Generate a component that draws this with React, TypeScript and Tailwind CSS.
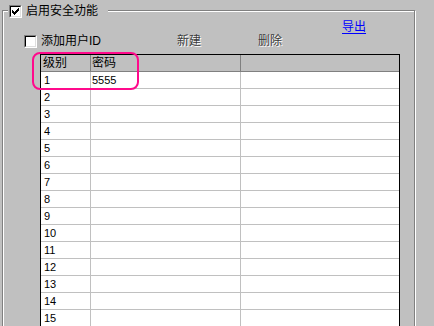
import React from "react";

const font = "font-['Liberation_Sans','Noto_Sans_CJK_SC',sans-serif]";

function Check({ checked }: { checked?: boolean }) {
  return (
    <div className="w-[13px] h-[13px] shrink-0 border border-t-[#808080] border-l-[#808080] border-b-white border-r-white">
      <div className="w-[11px] h-[11px] border border-t-black border-l-black border-b-[#dfdfdf] border-r-[#dfdfdf] bg-white flex items-center justify-center">
        {checked && (
          <svg width="7" height="7" viewBox="0 0 7 7" shapeRendering="crispEdges">
            <path
              fill="#000"
              d="M6 0h1v1h-1z M5 1h2v1h-2z M0 2h1v1h-1z M4 2h3v1h-3z M0 3h2v1h-2z M3 3h3v1h-3z M0 4h5v1h-5z M1 5h3v1h-3z M2 6h1v1h-1z"
            />
          </svg>
        )}
      </div>
    </div>
  );
}

const rows = Array.from({ length: 15 }, (_, i) => ({
  level: String(i + 1),
  pwd: i === 0 ? "5555" : "",
}));

export default function App() {
  return (
    <div className={`relative w-[434px] h-[326px] overflow-hidden bg-[#c0c0c0] text-black ${font}`}>
      {/* group box */}
      <div className="relative mt-[10px] ml-[2px] w-[413px] h-[420px] border border-[#808080] shadow-[1px_1px_0_#fff,inset_1px_1px_0_#fff]">
        <div className="absolute top-[-7px] left-[5px] w-[100px] h-[14px] bg-[#c0c0c0] flex items-center pl-[1px]">
          <Check checked />
          <span className="ml-[4px] text-[12px] leading-[14px]">启用安全功能</span>
        </div>

        <div className="mt-[9px] h-[14px] pl-[339px] flex items-center">
          <span className="text-[12px] leading-[14px] text-[#0000ff] underline underline-offset-2">导出</span>
        </div>

        <div className="h-[14px] pl-[21px] flex items-center">
          <Check />
          <span className="ml-[4px] w-[136px] text-[12px] leading-[14px]">添加用户ID</span>
          <span className="w-[81px] text-[12px] leading-[14px] text-[#3c3c3c] [text-shadow:1px_1px_0_#fff]">新建</span>
          <span className="text-[12px] leading-[14px] text-[#3c3c3c] [text-shadow:1px_1px_0_#fff]">删除</span>
        </div>

        {/* list */}
        <div className="mt-[6px] ml-[37px] w-[360px] border-t border-l border-r border-black bg-white">
          <div className="flex h-[17px] bg-[#c0c0c0] border-b border-[#808080] text-[12px] leading-[16px]">
            <div className="w-[50px] border-r border-[#808080] pl-[2px]">级别</div>
            <div className="w-[150px] border-r border-[#808080] pl-[1px]">密码</div>
            <div className="flex-1" />
          </div>
          {rows.map((r) => (
            <div key={r.level} className="flex h-[17px] border-b border-[#c0c0c0] text-[11px] leading-[16px]">
              <div className="w-[50px] border-r border-[#c0c0c0] pl-[3px]">{r.level}</div>
              <div className="w-[150px] border-r border-[#c0c0c0] pl-[1px]">{r.pwd}</div>
              <div className="flex-1" />
            </div>
          ))}
        </div>
      </div>

      {/* annotation highlight */}
      <div className="absolute left-[32px] top-[52px] w-[107px] h-[38px] rounded-[8px] border-2 border-[#ff0a8c]" />
    </div>
  );
}
